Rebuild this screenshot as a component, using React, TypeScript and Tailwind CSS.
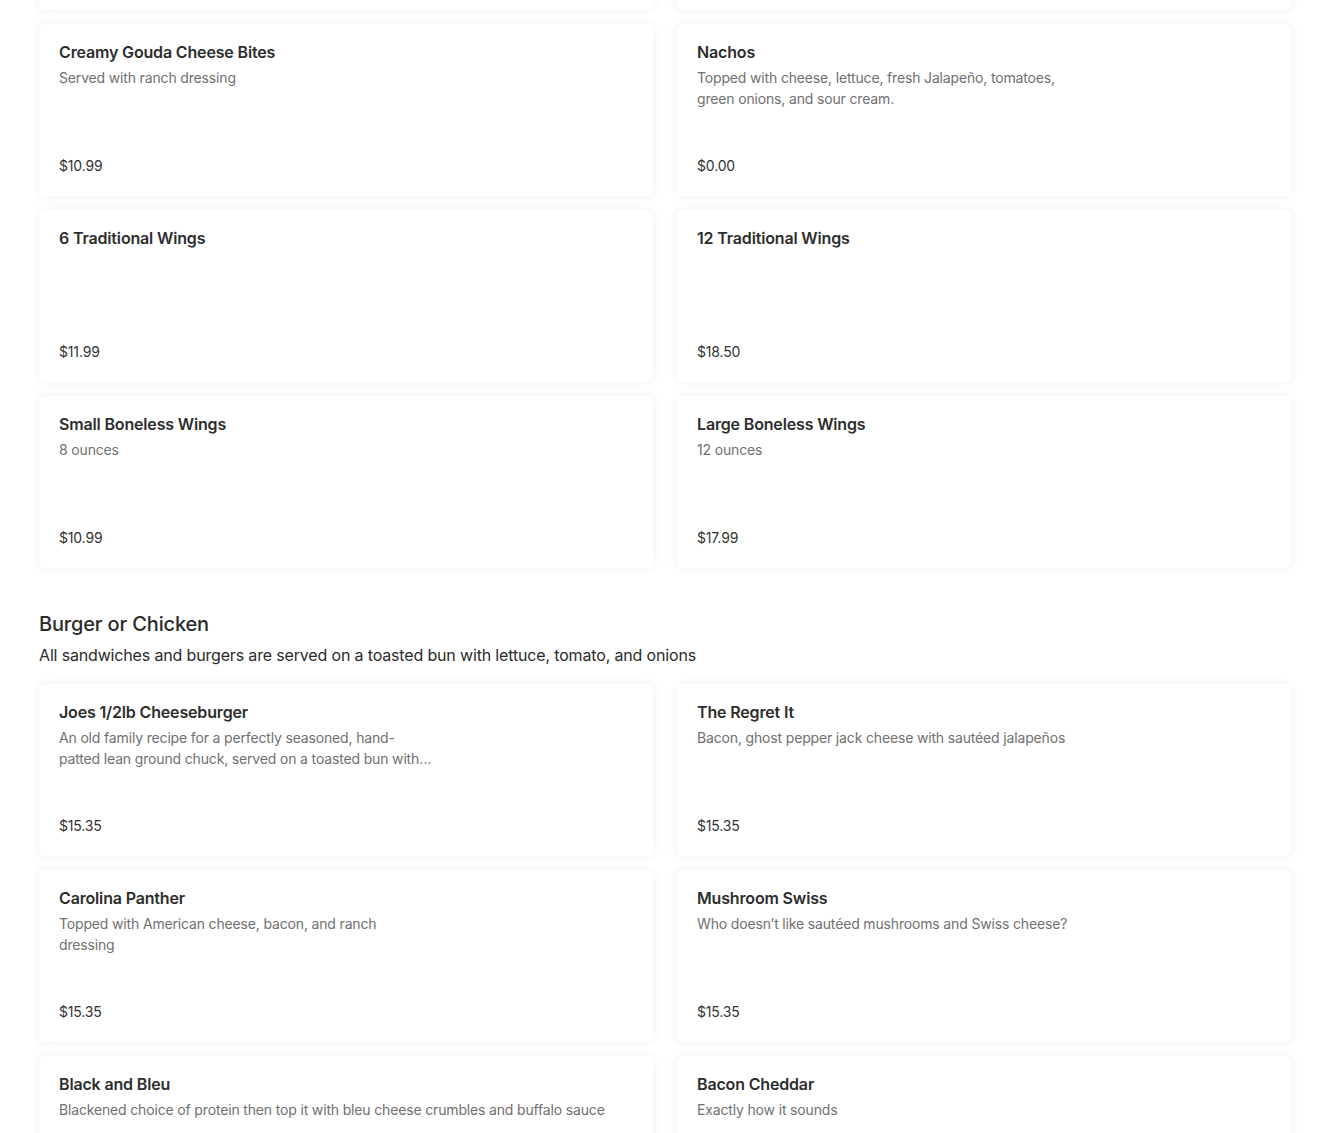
type MenuItem = {
    name: string;
    description?: string;
    price: string;
    clamp?: boolean;
    wide?: boolean;
};

const topItems: MenuItem[] = [
    { name: "Creamy Gouda Cheese Bites", description: "Served with ranch dressing", price: "$10.99" },
    { name: "Nachos", description: "Topped with cheese, lettuce, fresh Jalapeño, tomatoes, green onions, and sour cream.", price: "$0.00" },
    { name: "6 Traditional Wings", price: "$11.99" },
    { name: "12 Traditional Wings", price: "$18.50" },
    { name: "Small Boneless Wings", description: "8 ounces", price: "$10.99" },
    { name: "Large Boneless Wings", description: "12 ounces", price: "$17.99" },
];

const burgerItems: MenuItem[] = [
    { name: "Joes 1/2lb Cheeseburger", description: "An old family recipe for a perfectly seasoned, hand-patted lean ground chuck, served on a toasted bun with cheddar cheese and our house sauce", price: "$15.35", clamp: true },
    { name: "The Regret It", description: "Bacon, ghost pepper jack cheese with sautéed jalapeños", price: "$15.35" },
    { name: "Carolina Panther", description: "Topped with American cheese, bacon, and ranch dressing", price: "$15.35" },
    { name: "Mushroom Swiss", description: "Who doesn’t like sautéed mushrooms and Swiss cheese?", price: "$15.35" },
    { name: "Black and Bleu", description: "Blackened choice of protein then top it with bleu cheese crumbles and buffalo sauce", price: "$15.35", wide: true },
    { name: "Bacon Cheddar", description: "Exactly how it sounds", price: "$15.35" },
];

function ItemCard({ item }: { item: MenuItem }) {
    return (
        <div className="h-[172px] rounded-md bg-white shadow-[0_0_10px_rgba(0,0,0,0.07)] px-5 pt-4 pb-5 flex flex-col">
            <h3 className="text-[16px] leading-6 font-semibold text-[#2d2d2d]">{item.name}</h3>
            {item.description && (
                <p className={`mt-[3px] text-[14px] leading-[21px] text-[#707070] ${item.wide ? "max-w-[560px]" : "max-w-[373px]"} ${item.clamp ? "line-clamp-2" : ""}`}>
                    {item.description}
                </p>
            )}
            <p className="mt-auto text-[14px] leading-5 text-[#333333]">{item.price}</p>
        </div>
    );
}

export default function App() {
    return (
        <div className="h-[1133px] overflow-hidden bg-white px-[39px] font-['Inter',sans-serif] tracking-[-0.01em]">
            {/* bottom edge of the row above, scrolled out of view */}
            <div className="mt-[-162px] grid grid-cols-2 gap-x-6">
                <div className="h-[172px] rounded-md bg-white shadow-[0_0_10px_rgba(0,0,0,0.07)]"></div>
                <div className="h-[172px] rounded-md bg-white shadow-[0_0_10px_rgba(0,0,0,0.07)]"></div>
            </div>
            <div className="mt-[14px] grid grid-cols-2 gap-x-6 gap-y-[14px]">
                {topItems.map((item, index) => (
                    <ItemCard key={index} item={item} />
                ))}
            </div>

            <h2 className="mt-[42px] text-[20px] leading-7 font-medium text-[#2b2b2b]">Burger or Chicken</h2>
            <p className="mt-[5px] text-[16px] leading-6 text-[#2b2b2b]">All sandwiches and burgers are served on a toasted bun with lettuce, tomato, and onions</p>

            <div className="mt-[17px] grid grid-cols-2 gap-x-6 gap-y-[14px]">
                {burgerItems.map((item, index) => (
                    <ItemCard key={index} item={item} />
                ))}
            </div>
        </div>
    );
}
